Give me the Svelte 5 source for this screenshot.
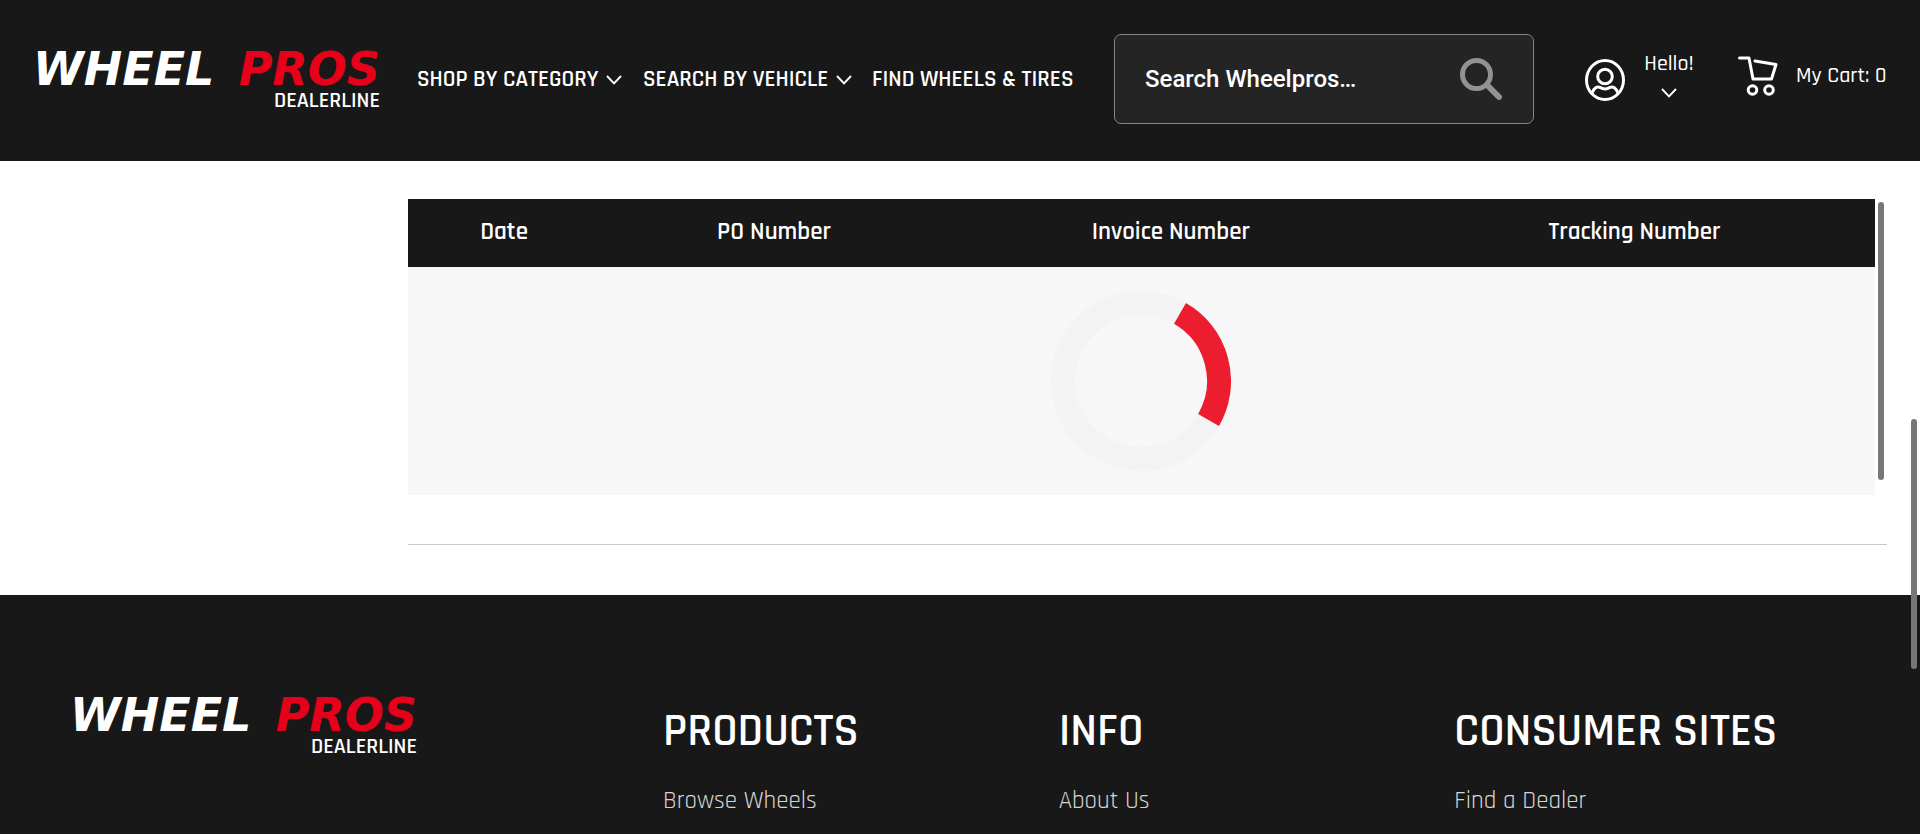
<script>
  const columns = [
    { label: 'Date', width: '13.1%' },
    { label: 'PO Number', width: '23.7%' },
    { label: 'Invoice Number', width: '30.4%' },
    { label: 'Tracking Number', width: '32.8%' }
  ];
  const groups = [
    { title: 'PRODUCTS', link: 'Browse Wheels' },
    { title: 'INFO', link: 'About Us' },
    { title: 'CONSUMER SITES', link: 'Find a Dealer' }
  ];
</script>

{#snippet logo()}
  <a class="logo" href="#home">
    <span class="mark"><span>WHEEL</span><span class="red">PROS</span></span>
    <span class="sub">DEALERLINE</span>
  </a>
{/snippet}

{#snippet chevron()}
  <svg class="chevron" viewBox="0 0 16 10" width="16" height="10" aria-hidden="true">
    <path d="M1 1l7 7.4L15 1" fill="none" stroke="#fff" stroke-width="1.9" />
  </svg>
{/snippet}

<div class="page">
  <header>
    {@render logo()}
    <nav>
      <a href="#category">SHOP BY CATEGORY {@render chevron()}</a>
      <a href="#vehicle">SEARCH BY VEHICLE {@render chevron()}</a>
      <a href="#wheels">FIND WHEELS &amp; TIRES</a>
    </nav>
    <form class="search">
      <input type="text" placeholder="Search Wheelpros…" aria-label="Search Wheelpros" />
      <button type="button" aria-label="Search">
        <svg viewBox="0 0 44 44" width="44" height="44">
          <g fill="none" stroke="#929292" stroke-linecap="round">
            <circle cx="17.5" cy="17.5" r="14" stroke-width="5" />
            <path d="M28 28l12 12" stroke-width="6" />
          </g>
        </svg>
      </button>
    </form>
    <button class="account" type="button">
      <svg viewBox="0 0 42 44" width="42" height="44" aria-hidden="true">
        <g fill="none" stroke="#fff" stroke-width="3">
          <ellipse cx="21" cy="22" rx="18.5" ry="19.5" />
          <circle cx="21" cy="18.5" r="7.3" />
          <path d="M8 35C10 30 13 28 16 29.4c3.300 2 6.700 2 10 0C29 28 32 30 34 35" />
        </g>
      </svg>
      <span class="hello">Hello! {@render chevron()}</span>
    </button>
    <a class="cart" href="#cart">
      <svg viewBox="0 0 42 42" width="42" height="42" aria-hidden="true">
        <g fill="none" stroke="#fff" stroke-width="3" stroke-linecap="round" stroke-linejoin="round">
          <path d="M2.500 3H12l4 21h18.500L39 9.500 18 6" />
          <circle cx="15.500" cy="35" r="4.300" />
          <circle cx="32" cy="35" r="4.300" />
        </g>
      </svg>
      <span>My Cart: 0</span>
    </a>
  </header>

  <main>
    <div class="orders">
      <table>
        <thead>
          <tr>
            {#each columns as c}
              <th scope="col" style:width={c.width}>{c.label}</th>
            {/each}
          </tr>
        </thead>
        <tbody>
          <tr>
            <td colspan="4">
              <svg class="spinner" viewBox="0 0 180 180" width="180" height="180" role="img" aria-label="Loading">
                <circle cx="90" cy="90" r="78" fill="none" stroke="#f3f3f3" stroke-width="24" />
                <path d="M129 22.450A78 78 0 0 1 157.550 129" fill="none" stroke="#eb1d2e" stroke-width="24" />
              </svg>
            </td>
          </tr>
        </tbody>
      </table>
      <div class="thumb"></div>
    </div>
    <hr />
  </main>

  <footer>
    {@render logo()}
    {#each groups as g}
      <section>
        <h2>{g.title}</h2>
        <a href="#footer">{g.link}</a>
      </section>
    {/each}
  </footer>
  <div class="page-thumb"></div>
</div>

<style>
  :global(body) { background: #fff; }
  .page {
    display: flex;
    flex-direction: column;
    height: 100vh;
    overflow: hidden;
    color: #fff;
    font-family: Rajdhani, Roboto, sans-serif;
  }
  .page * { box-sizing: border-box; }
  a { color: inherit; text-decoration: none; }
  button { padding: 0; border: 0; background: none; color: inherit; font: inherit; cursor: pointer; }
  svg { display: block; flex: none; }

  header {
    display: flex;
    align-items: center;
    flex: none;
    height: 161px;
    padding: 0 33px;
    background: #181818;
  }
  .logo {
    display: flex;
    flex-direction: column;
    flex: none;
    gap: 2px;
    width: 347px;
    padding-top: 2px;
  }
  .mark {
    display: flex;
    justify-content: space-between;
    font: italic bold 46px/36px "DejaVu Sans", sans-serif;
  }
  .red { color: #e60019; }
  .sub { align-self: flex-end; font-size: 22px; font-weight: 600; line-height: 24px; }
  nav {
    display: grid;
    grid-template-columns: 226px 229px auto;
    flex: 1;
    margin-left: 37px;
    padding-bottom: 2px;
    font-size: 23px;
    font-weight: 600;
    line-height: 24px;
    white-space: nowrap;
  }
  nav a { display: flex; align-items: center; gap: 8px; }
  .search {
    display: flex;
    align-items: center;
    flex: none;
    width: 420px;
    height: 90px;
    margin-bottom: 3px;
    padding: 0 30px;
    border: 1px solid #858585;
    border-radius: 7px;
    background: #242424;
  }
  .search input {
    flex: 1;
    min-width: 0;
    padding: 0;
    border: 0;
    outline: 0;
    background: none;
    color: #fff;
    font: 500 24px/32px Roboto, sans-serif;
  }
  .search input::placeholder { color: #fff; opacity: 1; }
  .account {
    display: flex;
    align-items: center;
    gap: 18px;
    margin-left: 50px;
    padding-bottom: 2px;
  }
  .hello {
    display: flex;
    flex-direction: column;
    align-items: center;
    gap: 12px;
    width: 50px;
    padding-bottom: 10px;
    font-size: 22px;
    font-weight: 500;
    line-height: 24px;
  }
  .cart {
    display: flex;
    align-items: center;
    gap: 17px;
    width: 150px;
    margin-left: 43px;
    margin-bottom: 10px;
    font-size: 22px;
    font-weight: 500;
    line-height: 24px;
    white-space: nowrap;
  }

  main { flex: none; padding: 38px 33px 50px 408px; }
  .orders { position: relative; padding-right: 12px; }
  table { width: 100%; border-collapse: collapse; table-layout: fixed; }
  th {
    height: 68px;
    padding: 0 0 3px;
    background: #181818;
    font-size: 25px;
    font-weight: 600;
    line-height: 28px;
  }
  td { height: 228px; padding: 0 2px 0 0; background: #f7f7f7; }
  .spinner { margin: 0 auto; }
  .thumb {
    position: absolute;
    top: 3px;
    right: 3px;
    bottom: 15px;
    width: 6px;
    border-radius: 3px;
    background: #777;
  }
  hr { height: 1px; margin: 49px 0 0; border: 0; background: #c8c8c8; }

  footer {
    display: grid;
    grid-template-columns: 593px 1fr 1fr 1fr;
    align-items: start;
    flex: 1;
    padding: 100px 70px 0;
    background: #181818;
  }
  h2 { margin: 14px 0 30px; font-size: 46px; font-weight: 600; line-height: 46px; white-space: nowrap; }
  section a { color: #d4d4d4; font-size: 25px; font-weight: 400; line-height: 32px; }
  .page-thumb {
    position: fixed;
    top: 419px;
    right: 3px;
    width: 6px;
    height: 250px;
    border-radius: 3px;
    background: #777;
  }
</style>
